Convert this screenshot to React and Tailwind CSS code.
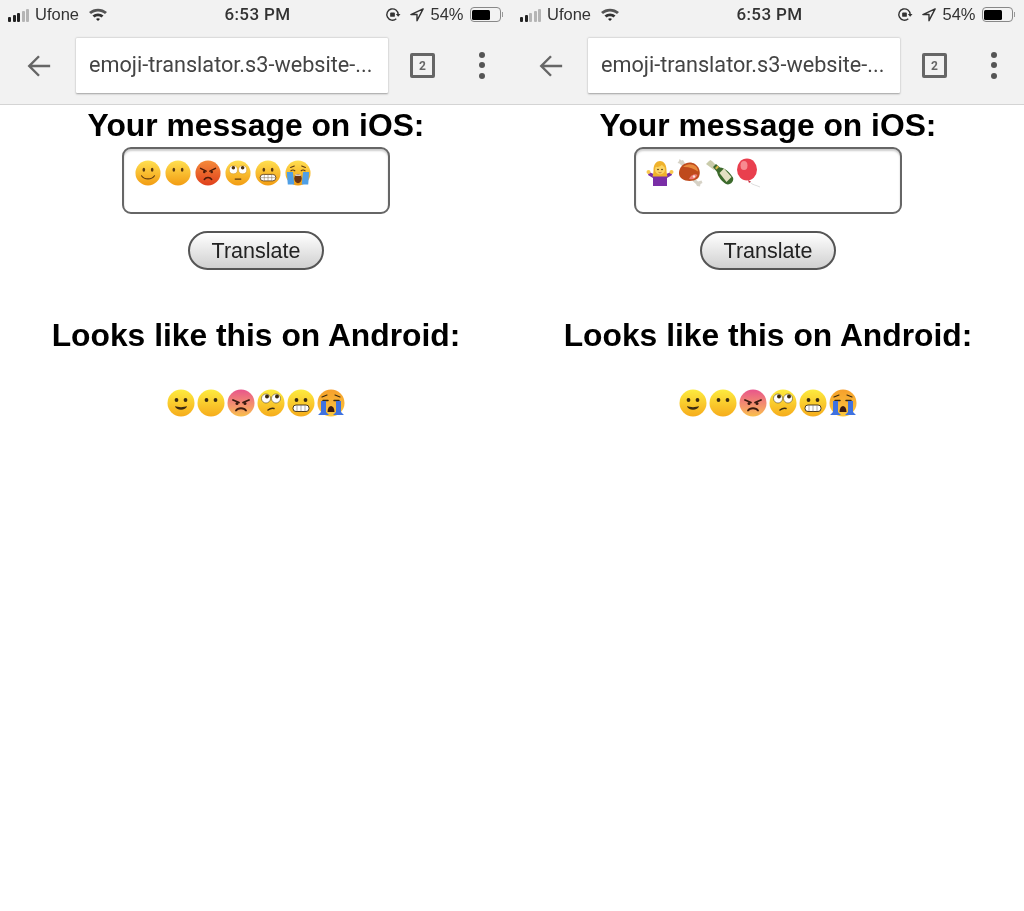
// Dos capturas de la app de emojis, una al lado de la otra
const FUENTE = "font-['Liberation_Sans',Arial,sans-serif]";

function Gradientes() {
  return (
    <svg width="0" height="0" className="absolute">
      <defs>
        <linearGradient id="amarillo" x1="0" y1="0" x2="0" y2="1">
          <stop offset="0" stopColor="#ffdf50" />
          <stop offset="1" stopColor="#f29c12" />
        </linearGradient>
        <linearGradient id="rojo" x1="0" y1="0" x2="0" y2="1">
          <stop offset="0" stopColor="#f58a3a" />
          <stop offset="1" stopColor="#e0401c" />
        </linearGradient>
        <linearGradient id="androide" x1="0" y1="0" x2="0" y2="1">
          <stop offset="0" stopColor="#fdeb3f" />
          <stop offset="1" stopColor="#f6ac1c" />
        </linearGradient>
        <linearGradient id="androideRojo" x1="0" y1="0" x2="0" y2="1">
          <stop offset="0" stopColor="#e8558c" />
          <stop offset="0.65" stopColor="#f5986a" />
          <stop offset="1" stopColor="#f9c04a" />
        </linearGradient>
        <linearGradient id="androideNaranja" x1="0" y1="0" x2="0" y2="1">
          <stop offset="0" stopColor="#f6a02c" />
          <stop offset="1" stopColor="#fbc83e" />
        </linearGradient>
      </defs>
    </svg>
  );
}

function Cara({ fondo = "url(#amarillo)", children, size = 26 }) {
  return (
    <svg width={size} height={size} viewBox="0 0 28 28" className="shrink-0 overflow-visible">
      <circle cx="14" cy="14" r="13.500" fill={fondo} />
      {children}
    </svg>
  );
}

// Caras de iOS
const ojos = (
  <>
    <ellipse cx="9.500" cy="10.500" rx="1.400" ry="2.200" fill="#5b3a12" />
    <ellipse cx="18.500" cy="10.500" rx="1.400" ry="2.200" fill="#5b3a12" />
  </>
);

const carasIos = [
  <Cara key="1">
    {ojos}
    <path d="M7 17c3 4.500 11 4.500 14 0" fill="none" stroke="#5b3a12" strokeWidth="1.200" strokeLinecap="round" />
  </Cara>,
  <Cara key="2">{ojos}</Cara>,
  <Cara key="3" fondo="url(#rojo)">
    <path d="M6 9l6 3M22 9l-6 3" stroke="#4a1a08" strokeWidth="1.600" strokeLinecap="round" />
    <circle cx="10" cy="13" r="1.400" fill="#4a1a08" />
    <circle cx="18" cy="13" r="1.400" fill="#4a1a08" />
    <path d="M10 21c2-3 6-3 8 0" fill="none" stroke="#4a1a08" strokeWidth="1.600" strokeLinecap="round" />
  </Cara>,
  <Cara key="4">
    <circle cx="9" cy="10.500" r="4.400" fill="#fff" stroke="#c98a1a" strokeWidth=".5" />
    <circle cx="19" cy="10.500" r="4.400" fill="#fff" stroke="#c98a1a" strokeWidth=".5" />
    <circle cx="9" cy="8.400" r="1.900" fill="#4a3010" />
    <circle cx="19" cy="8.400" r="1.900" fill="#4a3010" />
    <path d="M11 20.500h6" stroke="#5b3a12" strokeWidth="1.400" strokeLinecap="round" />
  </Cara>,
  <Cara key="5">
    {ojos}
    <rect x="5.500" y="15.500" width="17" height="7" rx="3.500" fill="#fff" stroke="#5b3a12" strokeWidth=".9" />
    <path d="M5.500 19h17M10 15.500v7M14 15.500v7M18 15.500v7" stroke="#8a7a60" strokeWidth=".6" />
  </Cara>,
  <Cara key="6">
    <path d="M6 8l4-1.500M22 8l-4-1.500" stroke="#5b3a12" strokeWidth="1.200" strokeLinecap="round" />
    <path d="M6 12c1.500-1.500 3.500-1.500 5 0M17 12c1.500-1.500 3.500-1.500 5 0" fill="none" stroke="#5b3a12" strokeWidth="1.200" />
    <path d="M2 13h6.500l1.500 13.500H3zM26 13h-6.500L18 26.500h7z" fill="#4f9fe6" />
    <ellipse cx="14" cy="20" rx="4" ry="5" fill="#6b3410" />
    <rect x="11" y="15.500" width="6" height="1.500" rx=".7" fill="#fff" />
  </Cara>,
];

// Emojis de la segunda pantalla
function Encogida() {
  return (
    <svg width="30" height="30" viewBox="0 0 30 30" className="shrink-0">
      <path d="M8 28V20L3 17l1-3 6 2.500h10l6-2.500 1 3-5 3v8z" fill="#7a2ea6" />
      <circle cx="3.500" cy="14" r="2" fill="#f9c84e" />
      <circle cx="26.500" cy="14" r="2" fill="#f9c84e" />
      <path d="M8.500 12C8.500 0 21.500 0 21.500 12c0 3 .5 5 1 6.500h-15c.5-1.500 1-3.500 1-6.500z" fill="#efb22c" />
      <circle cx="15" cy="11.500" r="5" fill="#fbd564" />
      <path d="M11 9c2 0 5-.5 6-2.500 1 1.500 2 2 2.500 3L18 6H12z" fill="#efb22c" />
      <circle cx="13" cy="11.500" r=".8" fill="#4a3010" />
      <circle cx="17" cy="11.500" r=".8" fill="#4a3010" />
      <path d="M13.500 14.300c1 .6 2 .6 3 0" fill="none" stroke="#a8502a" strokeWidth=".7" />
    </svg>
  );
}

function Carne() {
  return (
    <svg width="30" height="30" viewBox="0 0 30 30" className="shrink-0">
      <path d="M8 9L4.500 5.500 2.500 5l1.500-2 .5-2 2 1.500L8 2l3 5z" fill="#d6d2c6" />
      <path d="M20 21l3 2.500 3.500-1 1 2.500-2 1-.5 2.500-3-.5-1-2-3.500-3z" fill="#d6d2c6" />
      <path d="M4 14C5 6 14 2 20 6c6 4 6 12 2 15-6 4-19 2-18-7z" fill="#bf4a1c" />
      <path d="M8 9c4-3.500 9-3.500 13-.5 1 1 2 3 2 5-4-3-10-5-15-4.500z" fill="#e8893c" />
      <path d="M14 21c4 1 7-.5 8.500-4-2-2-7 0-8.500 4z" fill="#f07a78" />
      <circle cx="19" cy="18.500" r="1.200" fill="#f3e8dc" />
    </svg>
  );
}

function Botella() {
  return (
    <svg width="30" height="30" viewBox="0 0 30 30" className="shrink-0">
      <path d="M1 6l3-3 1.500-1 2 1.500 5 5-3.500 3.500z" fill="#c9cbaa" />
      <path d="M8 9l3-3 4 3.500c5 .5 10 5 13 10 1.500 4-3.500 8.500-7 6.500-4-2.500-8-7-9-12z" fill="#3c6a2c" />
      <path d="M14.500 15l4.500-4.500 7.500 8.500-5 5z" fill="#e4e0c2" />
      <path d="M10 10l2.500-2.500 1.500 1.500-2.500 2.500z" fill="#d9b84a" />
    </svg>
  );
}

function Globo() {
  return (
    <svg width="32" height="30" viewBox="0 0 32 30" className="shrink-0">
      <ellipse cx="12" cy="11.500" rx="10" ry="11" fill="#e93f4e" />
      <ellipse cx="9" cy="7.500" rx="3.500" ry="4.500" fill="#f78a90" />
      <path d="M13 22l3 1.500-2 1.500z" fill="#c92a3a" />
      <path d="M15 24c2 3 6 3 10 5" fill="none" stroke="#d4d4d4" strokeWidth=".8" />
    </svg>
  );
}

// Caras de Android
const ojosA = (
  <>
    <circle cx="9.500" cy="11" r="1.900" fill="#3a2a10" />
    <circle cx="18.500" cy="11" r="1.900" fill="#3a2a10" />
  </>
);

const carasAndroid = [
  <Cara key="1" fondo="url(#androide)" size={28}>
    {ojosA}
    <path d="M8 17c3 1.500 9 1.500 12 0-1 5-11 5-12 0z" fill="#3a2a10" />
  </Cara>,
  <Cara key="2" fondo="url(#androide)" size={28}>{ojosA}</Cara>,
  <Cara key="3" fondo="url(#androideRojo)" size={28}>
    <path d="M6 11l6 2.500M22 11l-6 2.500" stroke="#3a1a10" strokeWidth="1.800" strokeLinecap="round" />
    <circle cx="10" cy="14.500" r="1.500" fill="#3a1a10" />
    <circle cx="18" cy="14.500" r="1.500" fill="#3a1a10" />
    <path d="M9 21.500c2-3 8-3 10 0" fill="none" stroke="#3a1a10" strokeWidth="1.800" strokeLinecap="round" />
  </Cara>,
  <Cara key="4" fondo="url(#androide)" size={28}>
    <circle cx="9" cy="9.500" r="4.500" fill="#fff" stroke="#3a2a10" strokeWidth=".5" />
    <circle cx="19" cy="9.500" r="4.500" fill="#fff" stroke="#3a2a10" strokeWidth=".5" />
    <circle cx="10" cy="7.500" r="2" fill="#3a2a10" />
    <circle cx="20" cy="7.500" r="2" fill="#3a2a10" />
    <path d="M11 21c2-1.500 4-2 6-1.500" fill="none" stroke="#3a2a10" strokeWidth="1.500" strokeLinecap="round" />
  </Cara>,
  <Cara key="5" fondo="url(#androide)" size={28}>
    {ojosA}
    <rect x="6" y="16" width="16" height="6.500" rx="3" fill="#fff" stroke="#3a2a10" strokeWidth=".9" />
    <path d="M10 16v6.500M14 16v6.500M18 16v6.500" stroke="#777" strokeWidth=".6" />
  </Cara>,
  <Cara key="6" fondo="url(#androideNaranja)" size={28}>
    <path d="M5 8l5-2M23 8l-5-2" stroke="#3a2a10" strokeWidth="1.200" strokeLinecap="round" />
    <path d="M6 11.500h5M17 11.500h5" stroke="#3a2a10" strokeWidth="1.500" strokeLinecap="round" />
    <path d="M4 12h5v11l3 3H1l3-3zM24 12h-5v11l-3 3h11l-3-3z" fill="#3f72e0" />
    <path d="M10.500 23c0-8 7-8 7 0z" fill="#3a1a10" />
  </Cara>,
];

function Senal({ llenas }) {
  const alturas = [5, 7, 9, 11, 13];
  return (
    <div className="flex items-end gap-[1.500px] h-[14px]">
      {alturas.map((h, i) => (
        <div
          key={i}
          className={`w-[3px] rounded-[1px] ${i < llenas ? "bg-[#222]" : "bg-[#b5b5b5]"}`}
          style={{ height: h }}
        />
      ))}
    </div>
  );
}

function BarraEstado({ llenas }) {
  return (
    <div className="grid grid-cols-3 items-center h-[29px] pl-[8px] pr-[9px] text-[16.500px] text-[#333]">
      <div className="flex items-center gap-[6px]">
        <Senal llenas={llenas} />
        <span>Ufone</span>
        <svg width="20" height="15" viewBox="0 0 20 15" className="ml-[3px]">
          <path d="M1 5c5-4.500 13-4.500 18 0l-2 2c-4-3.500-10-3.500-14 0z" fill="#555" />
          <path d="M4.500 8.500c3-2.700 8-2.700 11 0l-2 2c-2-1.700-5-1.700-7 0z" fill="#333" />
          <path d="M8 12c1-1 3-1 4 0l-2 2z" fill="#222" />
        </svg>
      </div>
      <div className="text-center font-['Roboto',sans-serif] font-medium text-[17px] text-[#333] tracking-[0.4px] pl-[4px]">6:53 PM</div>
      <div className="flex items-center justify-end">
        <svg width="17" height="17" viewBox="0 0 18 18" className="mr-[9px]">
          <path d="M13 13.500A6 6 0 1 1 15 9" fill="none" stroke="#333" strokeWidth="1.500" />
          <path d="M15 11.500l-2.500-3h5z" fill="#333" />
          <rect x="6.500" y="7" width="5" height="4.500" rx="1" fill="#333" />
        </svg>
        <svg width="14" height="14" viewBox="0 0 16 16" className="mr-[6px]">
          <path d="M15 1L1 7.500h7V14.500z" fill="none" stroke="#333" strokeWidth="1.600" strokeLinejoin="round" />
        </svg>
        <span>54%</span>
        <div className="flex items-center ml-[6px]">
          <div className="w-[31px] h-[15px] border border-[#888] rounded-[4px] p-[1.500px]">
            <div className="w-[68%] h-full bg-black rounded-[1.500px]" />
          </div>
          <div className="w-[1.500px] h-[5px] bg-[#999] ml-[1px]" />
        </div>
      </div>
    </div>
  );
}

function BarraNavegador() {
  return (
    <div className="flex items-center h-[55px] mt-[9px]">
      <svg width="26" height="26" viewBox="0 0 28 28" className="ml-[26px] mr-[24px] shrink-0">
        <path d="M26 14H4M14 3.500L3.500 14 14 24.500" fill="none" stroke="#666" strokeWidth="2.600" />
      </svg>
      <div className="w-[312px] h-[55px] bg-white shadow-[0_0.5px_2px_rgba(0,0,0,0.35)] rounded-[1px] flex items-center pl-[13px] shrink-0 font-['Roboto',sans-serif] text-[21.650px] text-[#444] whitespace-nowrap">
        emoji-translator.s3-website-...
      </div>
      <div className="ml-[22px] w-[25px] h-[25px] border-[3px] border-[#666] rounded-[2px] flex items-center justify-center font-['Roboto',sans-serif] font-bold text-[12px] text-[#666] shrink-0">
        2
      </div>
      <div className="ml-[44px] flex flex-col gap-[4.500px] shrink-0 mb-[1px]">
        <div className="w-[6px] h-[6px] rounded-full bg-[#555]" />
        <div className="w-[6px] h-[6px] rounded-full bg-[#555]" />
        <div className="w-[6px] h-[6px] rounded-full bg-[#555]" />
      </div>
    </div>
  );
}

function Pantalla({ llenas, emojis, caja, gap }) {
  return (
    <div className="w-[512px] shrink-0">
      <header className="h-[105px] bg-[#f2f2f2] border-b border-[#d4d4d4]">
        <BarraEstado llenas={llenas} />
        <BarraNavegador />
      </header>

      <section className="flex flex-col items-center">
        <h1 className="text-[31.800px] leading-[40px] font-bold text-black">Your message on iOS:</h1>
        <div className={`mt-[2px] w-[268px] h-[67px] bg-white border-2 border-[#666] rounded-[9px] shadow-[inset_0_2px_2px_rgba(0,0,0,0.2)] ${caja}`}>
          <div className={`flex ${gap}`}>{emojis}</div>
        </div>
        <button className="mt-[17px] w-[136px] h-[39px] rounded-full border-2 border-[#555] bg-gradient-to-b from-white to-[#d0d0d0] text-[21.500px] text-[#222] pt-[1px]">
          Translate
        </button>
        <h2 className="mt-[45px] text-[31.800px] leading-[40px] font-bold text-black">Looks like this on Android:</h2>
        <div className="mt-[34px] flex gap-[2px]">{carasAndroid}</div>
      </section>
    </div>
  );
}

export default function App() {
  return (
    <main className={`w-[1024px] h-[911px] bg-white flex overflow-hidden blur-[0.4px] ${FUENTE}`}>
      <Gradientes />
      <Pantalla llenas={3} emojis={carasIos} caja="pl-[11px] pt-[11px]" gap="gap-[4px]" />
      <Pantalla
        llenas={2}
        caja="pl-[9px] pt-[9px]"
        gap="gap-0"
        emojis={[<Encogida key="a" />, <Carne key="b" />, <Botella key="c" />, <Globo key="d" />]}
      />
    </main>
  );
}
